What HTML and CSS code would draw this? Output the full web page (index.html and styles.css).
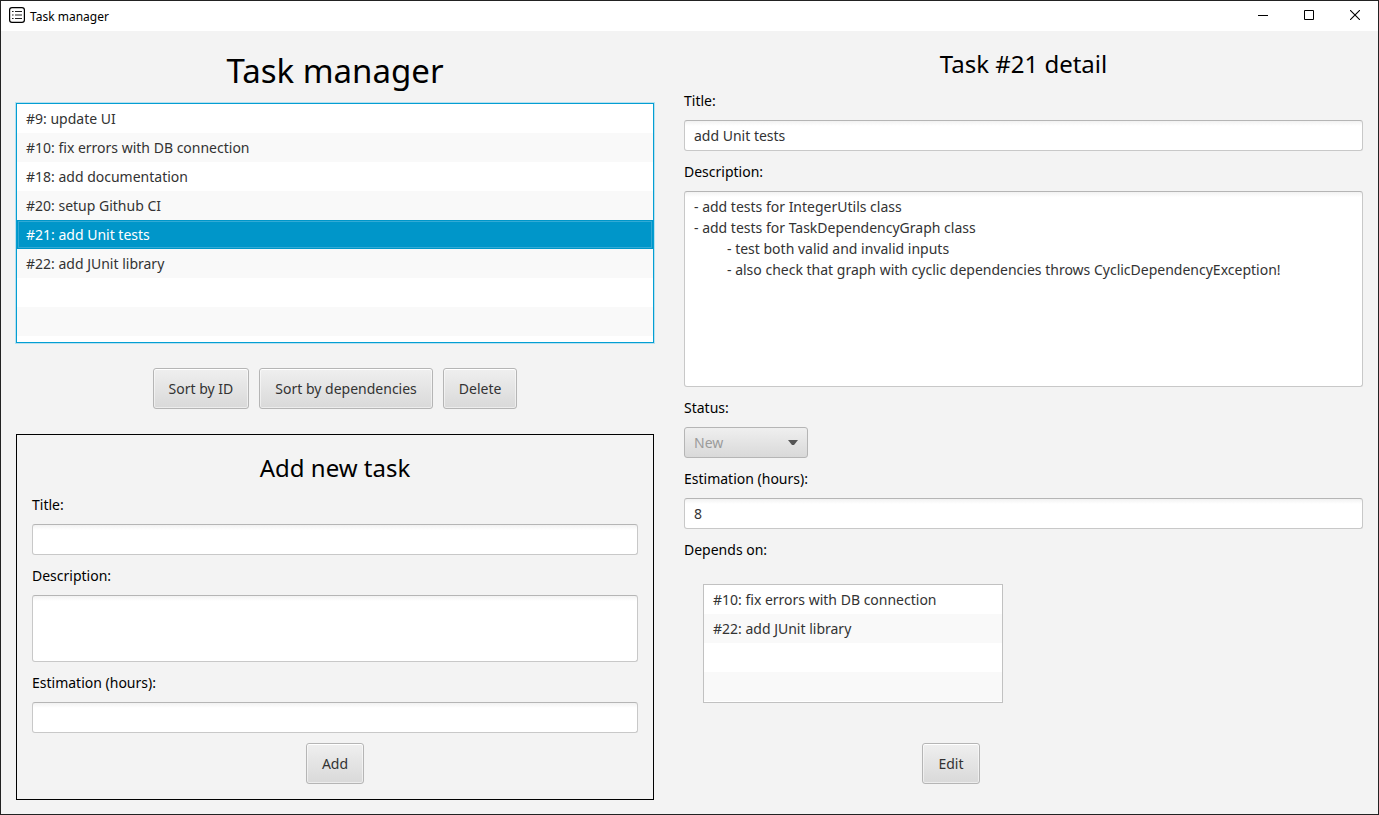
FILE: index.html
```
<!DOCTYPE html>
<html lang="en">
<head>
  <meta charset="utf-8">
  <meta name="viewport" content="width=device-width, initial-scale=1">
  <title>Task manager</title>
  <link rel="stylesheet" href="styles.css">
</head>
<body>
  <div class="window">
    <header class="titlebar">
      <svg class="app-icon" width="16" height="16" viewBox="0 0 16 16" aria-hidden="true">
        <rect x="0.6" y="0.6" width="14.8" height="14.8" rx="2.4" fill="#fff" stroke="#000" stroke-width="1.2"/>
        <path d="M3 4.5h1.6M3 8h1.6M3 11.5h1.6M6 4.5h7M6 8h7M6 11.5h7" stroke="#222" stroke-width="1.1" fill="none"/>
      </svg>
      <span class="titlebar-text">Task manager</span>
      <div class="window-controls">
        <button class="window-button" type="button" aria-label="Minimize">
          <svg width="10" height="10" viewBox="0 0 10 10"><path d="M0 5.5h10" stroke="#000" fill="none"/></svg>
        </button>
        <button class="window-button" type="button" aria-label="Maximize">
          <svg width="10" height="10" viewBox="0 0 10 10"><path d="M0.5 0.5h9v9h-9z" stroke="#000" fill="none"/></svg>
        </button>
        <button class="window-button" type="button" aria-label="Close">
          <svg width="10" height="10" viewBox="0 0 10 10"><path d="M0 0L10 10M10 0L0 10" stroke="#000" stroke-width="1.1" fill="none"/></svg>
        </button>
      </div>
    </header>

    <main class="content">
      <section class="tasks">
        <h1 class="page-title">Task manager</h1>
        <ul class="list list-main">
          <li class="row">#9: update UI</li>
          <li class="row">#10: fix errors with DB connection</li>
          <li class="row">#18: add documentation</li>
          <li class="row">#20: setup Github CI</li>
          <li class="row row-selected">#21: add Unit tests</li>
          <li class="row">#22: add JUnit library</li>
          <li class="row"></li>
          <li class="row"></li>
        </ul>
        <div class="actions">
          <button class="button" type="button">Sort by ID</button>
          <button class="button" type="button">Sort by dependencies</button>
          <button class="button" type="button">Delete</button>
        </div>
        <form class="form new-task">
          <h2 class="section-title">Add new task</h2>
          <label class="label" for="new-title">Title:</label>
          <input class="field" id="new-title" type="text">
          <label class="label" for="new-description">Description:</label>
          <textarea class="field area-short" id="new-description"></textarea>
          <label class="label" for="new-estimation">Estimation (hours):</label>
          <input class="field" id="new-estimation" type="text">
          <button class="button button-center" type="button">Add</button>
        </form>
      </section>

      <form class="form detail">
        <h2 class="section-title">Task #21 detail</h2>
        <label class="label" for="title">Title:</label>
        <input class="field" id="title" type="text" value="add Unit tests">
        <label class="label" for="description">Description:</label>
        <textarea class="field area-tall" id="description">- add tests for IntegerUtils class
- add tests for TaskDependencyGraph class
&#9;- test both valid and invalid inputs
&#9;- also check that graph with cyclic dependencies throws CyclicDependencyException!</textarea>
        <label class="label" for="status">Status:</label>
        <div class="select-wrap">
          <select class="select" id="status" disabled>
            <option>New</option>
          </select>
          <svg class="select-arrow" width="10" height="5" viewBox="0 0 10 5" aria-hidden="true"><path d="M0 0h10L6 5H4z" fill="#555"/></svg>
        </div>
        <label class="label" for="estimation">Estimation (hours):</label>
        <input class="field" id="estimation" type="text" value="8">
        <span class="label" id="depends-label">Depends on:</span>
        <div class="depends">
          <ul class="list list-depends" aria-labelledby="depends-label">
            <li class="row">#10: fix errors with DB connection</li>
            <li class="row">#22: add JUnit library</li>
            <li class="row"></li>
            <li class="row"></li>
          </ul>
          <button class="button button-center" type="button">Edit</button>
        </div>
      </form>
    </main>
  </div>
</body>
</html>
```
FILE: styles.css
```
* {
  box-sizing: border-box;
}

body {
  margin: 0;
  font-family: "Noto Sans", "Open Sans", sans-serif;
  font-size: 14px;
  line-height: 20px;
  color: #000;
}

.window {
  display: flex;
  flex-direction: column;
  min-height: 100vh;
  border: 1px solid #222;
  background: #f3f3f3;
}

.titlebar {
  display: flex;
  align-items: center;
  height: 30px;
  padding: 0 0 2px 8px;
  background: #fff;
  font-size: 12px;
}

.titlebar-text {
  margin-left: 5px;
  padding-top: 3px;
}

.window-controls {
  display: flex;
  align-self: stretch;
  margin-left: auto;
}

.window-button {
  display: flex;
  align-items: center;
  justify-content: center;
  width: 46px;
  padding: 0;
  border: 0;
  background: none;
}

.content {
  display: grid;
  grid-template-columns: 638fr 679fr;
  gap: 30px;
  flex: 1;
  padding: 15px 15px 14px;
}

.tasks,
.form {
  display: flex;
  flex-direction: column;
  min-width: 0;
}

.form {
  gap: 10px;
}

.page-title,
.section-title {
  margin: 0;
  font-weight: 400;
  text-align: center;
}

.page-title {
  margin-bottom: 7px;
  font-size: 33px;
  line-height: 50px;
}

.section-title {
  padding-top: 2px;
  font-size: 24px;
  line-height: 32px;
}

.label {
  padding-top: 2px;
  line-height: 18px;
}

.list {
  margin: 0;
  padding: 0;
  list-style: none;
  border: 1px solid #c1c1c1;
  background: #fff;
  color: #333;
}

.list-main {
  padding-bottom: 6px;
  border-color: #039ed3;
  box-shadow: 0 0 0 1px #b8e0ee;
}

.row {
  height: 29px;
  padding: 4px 9px;
  line-height: 21px;
}

.row:nth-child(even) {
  background: #f9f9f9;
}

.row.row-selected {
  border: 1px solid #0096c9;
  padding: 3px 8px;
  background: #0096c9;
  box-shadow: inset 0 0 0 1px #31aad5;
  color: #fff;
}

.actions {
  display: flex;
  justify-content: center;
  gap: 10px;
  margin: 25px 0;
}

.button {
  height: 41px;
  padding: 0 15px;
  border: 1px solid #b5b5b5;
  border-radius: 3px;
  background: linear-gradient(#efefef, #d9d9d9);
  box-shadow: inset 0 0 0 1px rgba(255, 255, 255, 0.5), inset 0 1px 0 #fff;
  color: #333;
  font: inherit;
}

.button-center {
  align-self: center;
}

.new-task {
  padding: 15px;
  border: 1px solid #000;
}

.field {
  display: block;
  width: 100%;
  height: 31px;
  margin: 0;
  padding: 0 9px;
  border: 1px solid #c8c8c8;
  border-top-color: #b5b5b5;
  border-radius: 3px;
  outline: 0;
  background: linear-gradient(#f2f2f2, #fff 5px);
  color: #333;
  font: inherit;
  resize: none;
}

.area-short,
.area-tall {
  padding: 4px 9px;
  line-height: 21px;
  tab-size: 33px;
}

.area-short {
  height: 67px;
}

.area-tall {
  height: 196px;
}

.select-wrap {
  position: relative;
  align-self: flex-start;
}

.select {
  display: block;
  width: 124px;
  height: 31px;
  padding: 0 9px;
  appearance: none;
  border: 1px solid #b5b5b5;
  border-radius: 3px;
  background: linear-gradient(#efefef, #d9d9d9);
  color: #9b9b9b;
  font: inherit;
  opacity: 1;
}

.select-arrow {
  position: absolute;
  top: 13px;
  right: 10px;
}

.depends {
  display: flex;
  flex-direction: column;
  width: 534px;
  max-width: 100%;
  padding-top: 15px;
}

.list-depends {
  width: 300px;
  margin: 0 0 40px 19px;
  padding-bottom: 1px;
}
```
